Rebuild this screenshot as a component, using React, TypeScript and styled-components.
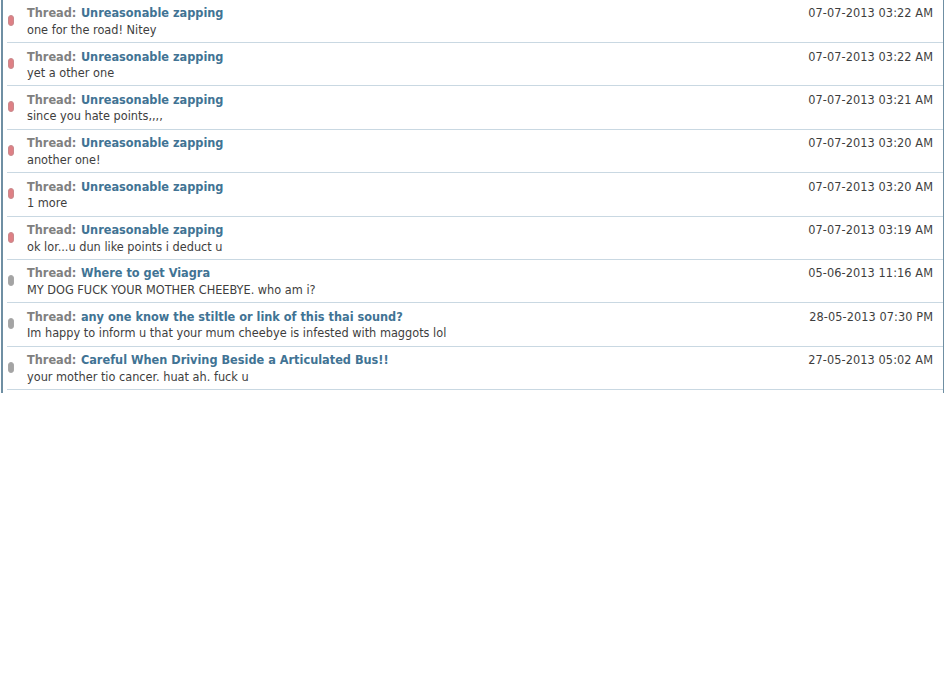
import React from "react";
import styled, { createGlobalStyle } from "styled-components";

const GlobalStyle = createGlobalStyle`
    html, body {
        margin: 0;
        padding: 0;
        background: #ffffff;
    }
`;

const Panel = styled.div`
    width: 936px;
    height: 393px;
    margin-left: 1px;
    border-left: 2px solid #6f8fa3;
    border-right: 1px solid #6f8fa3;
    padding-left: 4px;
    font-family: "DejaVu Sans Condensed", "DejaVu Sans", Tahoma, sans-serif;
`;

const Row = styled.div`
    display: flex;
    align-items: flex-start;
    height: 43.4px;
    box-sizing: border-box;
    border-bottom: 1px solid #c9d8e2;
    padding-top: 5.5px;

    &:first-child {
        margin-top: -0.4px;
    }
`;

const Marker = styled.span<{ $tone: "red" | "grey" }>`
    flex: none;
    width: 6px;
    height: 11px;
    margin: 9.5px 0 0 1px;
    border-radius: 3px;
    border: 1px solid ${(p) => (p.$tone === "red" ? "#c98a8d" : "#a8a8a8")};
    background: ${(p) => (p.$tone === "red" ? "#de8085" : "#a4a4a4")};
    box-sizing: border-box;
`;

const Body = styled.div`
    flex: 1;
    margin-left: 13px;
    min-width: 0;
`;

const Title = styled.div`
    font-size: 12.6px;
    line-height: 15px;
    font-weight: bold;
    color: #808080;
    white-space: nowrap;
`;

const ThreadLink = styled.a`
    margin-left: 0.6px;
    color: #417394;
    text-decoration: none;
`;

const Snippet = styled.div`
    font-size: 12.6px;
    line-height: 15px;
    margin-top: 1.5px;
    color: #3e3e3e;
    white-space: nowrap;
`;

const DateCell = styled.div`
    flex: none;
    font-size: 12.6px;
    line-height: 15px;
    letter-spacing: 0.08px;
    padding-right: 10px;
    color: #3e3e3e;
    white-space: nowrap;
`;

const rows: { tone: "red" | "grey"; thread: string; text: string; date: string }[] = [
    { tone: "red", thread: "Unreasonable zapping", text: "one for the road! Nitey", date: "07-07-2013 03:22 AM" },
    { tone: "red", thread: "Unreasonable zapping", text: "yet a other one", date: "07-07-2013 03:22 AM" },
    { tone: "red", thread: "Unreasonable zapping", text: "since you hate points,,,,", date: "07-07-2013 03:21 AM" },
    { tone: "red", thread: "Unreasonable zapping", text: "another one!", date: "07-07-2013 03:20 AM" },
    { tone: "red", thread: "Unreasonable zapping", text: "1 more", date: "07-07-2013 03:20 AM" },
    { tone: "red", thread: "Unreasonable zapping", text: "ok lor...u dun like points i deduct u", date: "07-07-2013 03:19 AM" },
    { tone: "grey", thread: "Where to get Viagra", text: "MY DOG FUCK YOUR MOTHER CHEEBYE. who am i?", date: "05-06-2013 11:16 AM" },
    { tone: "grey", thread: "any one know the stiltle or link of this thai sound?", text: "Im happy to inform u that your mum cheebye is infested with maggots lol", date: "28-05-2013 07:30 PM" },
    { tone: "grey", thread: "Careful When Driving Beside a Articulated Bus!!", text: "your mother tio cancer. huat ah. fuck u", date: "27-05-2013 05:02 AM" },
];

export default function App() {
    return (
        <>
            <GlobalStyle />
            <Panel>
                {rows.map((row, i) => (
                    <Row key={i}>
                        <Marker $tone={row.tone} />
                        <Body>
                            <Title>
                                Thread: <ThreadLink href="#">{row.thread}</ThreadLink>
                            </Title>
                            <Snippet>{row.text}</Snippet>
                        </Body>
                        <DateCell>{row.date}</DateCell>
                    </Row>
                ))}
            </Panel>
        </>
    );
}
